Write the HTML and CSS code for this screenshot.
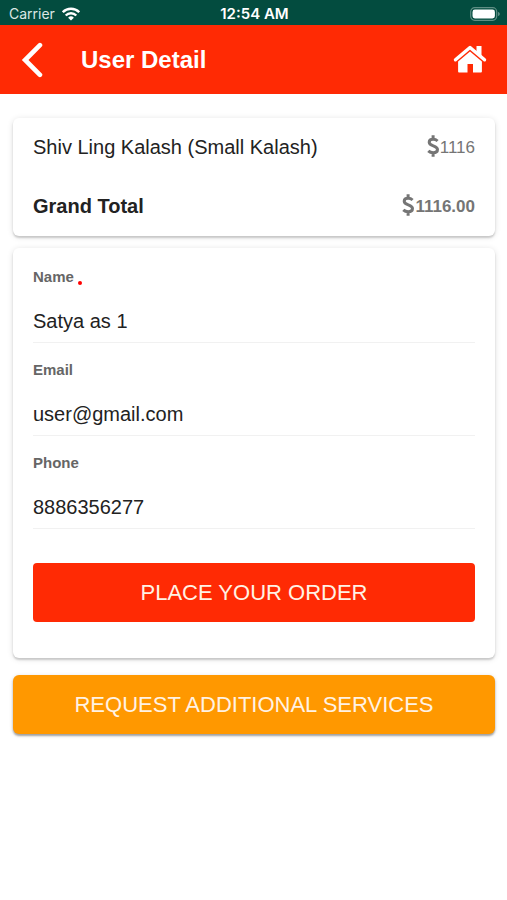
FILE: index.html
```html
<!DOCTYPE html>
<html lang="en">
<head>
<meta charset="utf-8">
<meta name="viewport" content="width=device-width, initial-scale=1">
<title>User Detail</title>
<link rel="stylesheet" href="styles.css">
</head>
<body>
<svg class="sprite" aria-hidden="true">
  <symbol id="dollar" viewBox="0 0 12 22">
    <path d="M10.600 6C9.400 4.900 8 4.300 6.200 4.300c-2.500 0-4 1.100-4 2.900 0 4.400 8.300 2.900 8.300 7.400 0 2.100-1.800 3.200-4.300 3.200-2 0-3.700-.7-4.900-1.900M6.100 0.300v3.700M6.100 18v3.700" fill="none" stroke="currentColor" stroke-width="3"/>
  </symbol>
</svg>
<div class="status">
  <div class="carrier">
    <span>Carrier</span>
    <svg class="wifi" viewBox="0 0 18 14" aria-hidden="true">
      <g fill="none" stroke="currentColor" stroke-width="2.400">
        <path d="M0.800 5.200a11.600 11.600 0 0 1 16.400 0"/>
        <path d="M3.700 8.500a7.500 7.500 0 0 1 10.600 0"/>
      </g>
      <path d="M6.100 10.700a4.200 4.200 0 0 1 5.800 0L9 13.600z" fill="currentColor"/>
    </svg>
  </div>
  <span class="time">12:54 AM</span>
  <svg class="battery" viewBox="0 0 30 14" aria-hidden="true">
    <rect x="0.700" y="0.700" width="26" height="12.600" rx="4" fill="none" stroke="#5f8e84" stroke-width="1.200"/>
    <rect x="2.500" y="2.500" width="22.400" height="9" rx="2.400" fill="#fff"/>
    <path d="M28 5v4c1.200-.4 1.800-1.100 1.800-2S29.200 5.400 28 5z" fill="#5f8e84"/>
  </svg>
</div>
<header class="bar">
  <button class="icon-button" type="button" aria-label="Back">
    <svg class="back" viewBox="0 0 20 34" aria-hidden="true">
      <path d="M17.500 3 3.500 17l14 14" fill="none" stroke="currentColor" stroke-width="4.400" stroke-linecap="round"/>
    </svg>
  </button>
  <h1>User Detail</h1>
  <a class="icon-button" href="#" aria-label="Home">
    <svg class="home" viewBox="0 0 34 28" aria-hidden="true">
      <path d="M2.500 14.800 17 2.500l14.500 12.300" fill="none" stroke="currentColor" stroke-width="3.400" stroke-linecap="round" stroke-linejoin="round"/>
      <path d="M23.500 1H28.500v10.500l-5-4.200zM17 6.600 28.900 16.600v10q0 .9-.9.900H20v-8.500h-5.500v8.500H6q-.9 0-.9-.9V16.600z" fill="currentColor"/>
    </svg>
  </a>
</header>
<main>
  <section class="card">
    <div class="row">
      <span>Shiv Ling Kalash (Small Kalash)</span>
      <span class="price"><svg class="dollar" role="img" aria-label="$"><use href="#dollar"/></svg>1116</span>
    </div>
    <div class="row total">
      <span>Grand Total</span>
      <span class="price"><svg class="dollar" role="img" aria-label="$"><use href="#dollar"/></svg>1116.00</span>
    </div>
  </section>
  <form class="card form">
    <div class="field">
      <label for="name">Name<span class="required"></span></label>
      <input id="name" type="text" value="Satya as 1" required>
    </div>
    <div class="field">
      <label for="email">Email</label>
      <input id="email" type="email" value="user@gmail.com">
    </div>
    <div class="field">
      <label for="phone">Phone</label>
      <input id="phone" type="tel" value="8886356277">
    </div>
    <button class="action order" type="button">PLACE YOUR ORDER</button>
  </form>
  <button class="action request" type="button">REQUEST ADDITIONAL SERVICES</button>
</main>
</body>
</html>
```
FILE: styles.css
```css
* {
  box-sizing: border-box;
}

body {
  margin: 0;
  background: #fff;
  color: #222;
  font-family: "Liberation Sans", Arial, sans-serif;
  font-size: 20px;
}

button,
input {
  margin: 0;
  padding: 0;
  border: 0;
  background: none;
  color: inherit;
  font: inherit;
}

svg {
  display: block;
  flex: none;
}

.sprite {
  position: absolute;
  width: 0;
  height: 0;
}

.status {
  display: grid;
  grid-template-columns: 1fr auto 1fr;
  align-items: center;
  height: 25px;
  padding: 2px 7px 0 9px;
  background: #034c3f;
  color: #fff;
  font-family: Inter, sans-serif;
  font-size: 14px;
}

.carrier {
  display: flex;
  align-items: center;
  gap: 7px;
  color: #dbe7e4;
}

.wifi {
  width: 18px;
  height: 14px;
  color: #fff;
}

.time {
  font-size: 15px;
  font-weight: 600;
}

.battery {
  justify-self: end;
  width: 30px;
  height: 14px;
}

.bar {
  display: flex;
  align-items: center;
  height: 69px;
  padding: 0 20px 0 21px;
  background: #ff2a04;
  color: #fff;
}

.bar h1 {
  flex: 1;
  margin: 0 0 0 38px;
  font-size: 24px;
  line-height: 28px;
}

.icon-button {
  color: #fff;
}

.back {
  width: 22px;
  height: 36px;
}

.home {
  width: 34px;
  height: 28px;
  margin-bottom: 2px;
}

main {
  padding: 24px 12px 24px 13px;
}

.card {
  margin-bottom: 12px;
  padding: 0 20px;
  border-radius: 6px;
  background: #fff;
  box-shadow: 0 2px 2px rgba(0, 0, 0, 0.16), 0 1px 6px rgba(0, 0, 0, 0.12);
}

.row {
  display: flex;
  align-items: center;
  justify-content: space-between;
  height: 59px;
}

.price {
  display: flex;
  align-items: center;
  color: #757575;
  font-size: 17px;
}

.dollar {
  width: 12px;
  height: 22px;
  margin: 0 1px 4px 0;
}

.total {
  font-weight: bold;
}

.form {
  margin-bottom: 17px;
  padding-top: 2px;
  padding-bottom: 36px;
}

.field {
  display: flex;
  flex-direction: column;
  height: 93px;
  padding-top: 17px;
  border-bottom: 1px solid #f1f1f1;
}

.field label {
  display: flex;
  align-items: center;
  color: #666;
  font-size: 15px;
  font-weight: bold;
  line-height: 20px;
}

.required {
  width: 4px;
  height: 4px;
  margin: 12px 0 0 4px;
  border-radius: 50%;
  background: #f00;
}

.field input {
  width: 100%;
  height: 40px;
  margin-top: 14px;
  outline: 0;
}

.action {
  display: block;
  width: 100%;
  height: 59px;
  color: #fff2e4;
  font-size: 22px;
}

.order {
  margin-top: 34px;
  border-radius: 4px;
  background: #ff2a04;
}

.request {
  border-radius: 6px;
  background: #ff9800;
  box-shadow: 0 2px 2px rgba(0, 0, 0, 0.3), 0 1px 4px rgba(0, 0, 0, 0.15);
}
```
